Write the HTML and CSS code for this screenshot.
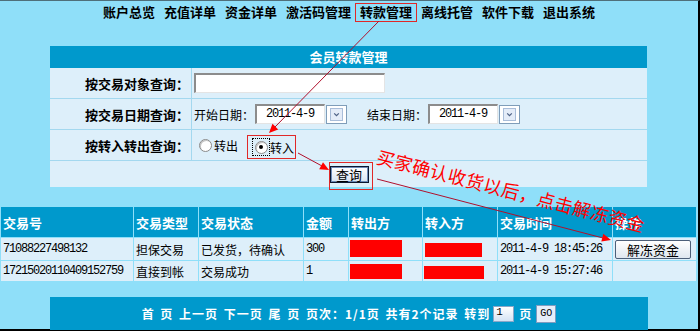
FILE: index.html
```html
<!DOCTYPE html>
<html lang="zh-CN">
<head>
<meta charset="utf-8">
<title>会员转款管理</title>
<link rel="stylesheet" href="styles.css">
</head>
<body>
<div class="frame">
  <nav class="nav">
    <span class="nav-item">账户总览</span>
    <span class="nav-item">充值详单</span>
    <span class="nav-item">资金详单</span>
    <span class="nav-item">激活码管理</span>
    <span class="nav-item nav-active">转款管理</span>
    <span class="nav-item">离线托管</span>
    <span class="nav-item">软件下载</span>
    <span class="nav-item">退出系统</span>
  </nav>

  <section class="panel">
    <div class="panel-title">会员转款管理</div>
    <div class="form-row">
      <div class="form-label">按交易对象查询：</div>
      <div class="form-field"><span class="field field-wide"></span></div>
    </div>
    <div class="form-row">
      <div class="form-label">按交易日期查询：</div>
      <div class="form-field">
        <span class="caption">开始日期：</span>
        <span class="field field-date">2011-4-9</span>
        <span class="picker"><svg width="21" height="19" viewBox="0 0 21 19"><rect x="0.5" y="0.5" width="20" height="18" fill="#fff" stroke="#7f9db9"/><rect x="4.5" y="3.5" width="12" height="12" fill="#e4ecf8" stroke="#a9bdd9"/><path d="M8.2 8.3l2.3 2.4 2.3-2.4" fill="none" stroke="#4d6185" stroke-width="1.2"/></svg></span>
        <span class="caption caption-end">结束日期：</span>
        <span class="field field-date">2011-4-9</span>
        <span class="picker"><svg width="21" height="19" viewBox="0 0 21 19"><rect x="0.5" y="0.5" width="20" height="18" fill="#fff" stroke="#7f9db9"/><rect x="4.5" y="3.5" width="12" height="12" fill="#e4ecf8" stroke="#a9bdd9"/><path d="M8.2 8.3l2.3 2.4 2.3-2.4" fill="none" stroke="#4d6185" stroke-width="1.2"/></svg></span>
      </div>
    </div>
    <div class="form-row">
      <div class="form-label">按转入转出查询：</div>
      <div class="form-field">
        <span class="radio"></span><span class="radio-text">转出</span>
        <span class="radio-mark">
          <span class="focus-ring"><span class="radio radio-on"></span></span><span class="radio-text">转入</span>
        </span>
      </div>
    </div>
    <div class="form-row form-submit">
      <span class="submit-mark"><span class="btn btn-query">查询</span></span>
    </div>
  </section>

  <table class="grid">
    <colgroup>
      <col class="c-no"><col class="c-type"><col class="c-state"><col class="c-amt"><col class="c-out"><col class="c-in"><col class="c-time"><col class="c-op">
    </colgroup>
    <thead>
      <tr><th>交易号</th><th>交易类型</th><th>交易状态</th><th>金额</th><th>转出方</th><th>转入方</th><th>交易时间</th><th>操作</th></tr>
    </thead>
    <tbody>
      <tr class="row-first">
        <td class="num">71088227498132</td>
        <td>担保交易</td>
        <td>已发货，待确认</td>
        <td class="num">300</td>
        <td class="masked"><span class="mask mask-a"></span></td>
        <td class="masked"><span class="mask mask-b"></span></td>
        <td class="num">2011-4-9 18:45:26</td>
        <td class="op"><span class="btn btn-thaw">解冻资金</span></td>
      </tr>
      <tr class="row-second">
        <td class="num">17215020110409152759</td>
        <td>直接到帐</td>
        <td>交易成功</td>
        <td class="num">1</td>
        <td class="masked"><span class="mask mask-c"></span></td>
        <td class="masked"><span class="mask mask-d"></span></td>
        <td class="num">2011-4-9 15:27:46</td>
        <td class="op"></td>
      </tr>
    </tbody>
  </table>

  <div class="pager">
    <span class="pager-text">首 页 上一页 下一页 尾 页 页次：1/1页 共有2个记录 转到</span>
    <span class="page-input">1</span>
    <span class="pager-text pager-unit">页</span>
    <span class="btn-go">GO</span>
  </div>

  <svg class="arrows" width="700" height="331" viewBox="0 0 700 331">
    <g stroke="#b0102c" stroke-width="1" fill="none">
      <line x1="379" y1="21" x2="274" y2="128"/>
      <line x1="298" y1="153" x2="322" y2="166"/>
      <line x1="377" y1="179" x2="603" y2="238"/>
    </g>
    <g fill="#ff0000">
      <polygon points="269,133 278.2,129.4 272.5,123.8"/>
      <polygon points="329,170 319.2,169.2 323,162.2"/>
      <polygon points="611,240 601.3,241.6 603.3,233.8"/>
    </g>
  </svg>
  <div class="note">买家确认收货以后，点击解冻资金</div>
</div>
</body>
</html>
```

FILE: styles.css
```css
* {
  box-sizing: border-box;
  margin: 0;
  padding: 0;
}

html, body {
  width: 700px;
  height: 331px;
  overflow: hidden;
}

body {
  background: #8fdff9;
  font-family: "Noto Sans CJK SC", "Liberation Sans", sans-serif;
  font-size: 12px;
  color: #000;
}

.frame {
  position: relative;
  width: 700px;
  height: 331px;
  border-top: 1px solid #4f6f7a;
  border-right: 2px solid #000;
  border-bottom: 2px solid #000;
}

/* top navigation */
.nav {
  display: flex;
  justify-content: center;
  gap: 9px;
  height: 21px;
  padding-top: 2px;
  font-size: 13px;
  font-weight: bold;
  line-height: 18px;
}

.nav-item {
  position: relative;
  white-space: nowrap;
}

.nav-active::after {
  content: "";
  position: absolute;
  left: -5px;
  right: -5px;
  top: 0;
  bottom: 0;
  border: 1px solid #e02828;
}

/* search panel */
.panel {
  width: 597px;
  margin: 24px 0 0 50px;
  background: #ddeffa;
}

.panel-title {
  height: 22px;
  line-height: 22px;
  background: #0099cc;
  color: #fff;
  font-size: 13px;
  font-weight: bold;
  text-align: center;
}

.form-row {
  display: grid;
  grid-template-columns: 142px 1fr;
  height: 31px;
  border-bottom: 1px solid #a3d8ef;
}

.form-label {
  display: flex;
  align-items: center;
  justify-content: flex-end;
  padding-right: 2px;
  border-right: 1px solid #a3d8ef;
  font-size: 13px;
  font-weight: bold;
  white-space: nowrap;
}

.form-field {
  display: flex;
  align-items: center;
  padding-left: 2px;
  white-space: nowrap;
}

.field {
  display: block;
  height: 20px;
  background: #fff;
  border-style: solid;
  border-width: 2px 1px 1px 2px;
  border-color: #8c8c8c #e4e4e4 #e4e4e4 #8c8c8c;
}

.field-wide {
  width: 191px;
}

.field-date {
  width: 70px;
  margin-left: 1px;
  padding-left: 9px;
  font-family: "Liberation Mono", monospace;
  font-size: 12px;
  letter-spacing: -1.2px;
  line-height: 16px;
}

.caption {
  font-size: 12px;
}

.caption-end {
  margin-left: 20px;
}

.picker {
  display: block;
  height: 19px;
  margin-left: 1px;
}

.picker svg {
  display: block;
}

.radio {
  display: block;
  width: 13px;
  height: 13px;
  margin-left: 5px;
  border-radius: 50%;
  border: 1px solid #8a8a8a;
  background: #fff;
  box-shadow: inset 1px 1px 0 #c4c4c4;
  position: relative;
}

.radio-on::after {
  content: "";
  position: absolute;
  left: 3.5px;
  top: 3.5px;
  width: 4px;
  height: 4px;
  border-radius: 50%;
  background: #000;
}

.radio-text {
  margin-left: 2px;
  font-size: 12px;
}

.radio-mark {
  display: flex;
  align-items: center;
  height: 24px;
  margin: 4px 0 0 9px;
  padding: 0 1px 0 4px;
  border: 1px solid #e02828;
}

.focus-ring {
  display: flex;
  align-items: center;
  justify-content: center;
  width: 18px;
  height: 18px;
  border: 1px dotted #000;
}

.focus-ring .radio {
  margin-left: 0;
}

.focus-ring + .radio-text {
  margin-left: 0;
}

.form-submit {
  display: flex;
  justify-content: center;
  align-items: center;
  height: 26px;
  border-bottom: 0;
}

.submit-mark {
  position: relative;
  display: block;
  margin-left: 1px;
}

.submit-mark::after {
  content: "";
  position: absolute;
  left: -1px;
  top: -4px;
  right: -4px;
  bottom: -7px;
  border: 1px solid #e02828;
}

.btn {
  display: flex;
  align-items: center;
  justify-content: center;
  white-space: nowrap;
}

.btn-query {
  width: 39px;
  height: 17px;
  font-size: 13px;
  border: 1px solid #0b1630;
  box-shadow: inset 0 0 0 1px #6d8bb8;
  background: linear-gradient(#ffffff, #d9e3f2);
}

/* data grid */
.grid {
  margin-top: 19px;
  width: 697px;
  table-layout: fixed;
  border-collapse: separate;
  border-spacing: 1px;
}

.c-no { width: 132px; }
.c-type { width: 64px; }
.c-state { width: 104px; }
.c-amt { width: 44px; }
.c-out { width: 73px; }
.c-in { width: 74px; }
.c-time { width: 114px; }
.c-op { width: 83px; }

.grid th {
  height: 30px;
  padding-left: 2px;
  background: #0099cc;
  color: #fff;
  font-size: 13px;
  font-weight: bold;
  text-align: left;
  white-space: nowrap;
}

.grid td {
  padding-left: 2px;
  background: #ddeffa;
  font-size: 12px;
  white-space: nowrap;
  overflow: hidden;
}

.row-first td {
  height: 22px;
}

.row-second td {
  height: 20px;
}

.grid td.num {
  font-family: "Liberation Mono", monospace;
  font-size: 12px;
  letter-spacing: -1.2px;
}

.grid td.masked {
  padding: 0 0 1px 1px;
  vertical-align: bottom;
}

.mask {
  display: block;
  background: #ff0000;
}

.mask-a { width: 52px; height: 17px; margin-bottom: 2px; }
.mask-b { width: 57px; height: 14px; margin-bottom: 2px; margin-left: 1px; }
.mask-c { width: 52px; height: 15px; margin-bottom: 1px; }
.mask-d { width: 60px; height: 13px; margin-bottom: 1px; }

.grid td.op {
  padding-left: 2px;
}

.btn-thaw {
  width: 76px;
  height: 19px;
  font-size: 13px;
  border: 1px solid #4d5f79;
  border-radius: 2px;
  background: linear-gradient(#ffffff, #dfe6ef);
}

/* pager */
.pager {
  display: flex;
  justify-content: center;
  align-items: center;
  width: 598px;
  height: 33px;
  margin: 15px 0 0 50px;
  background: #0099cc;
  color: #fff;
  font-size: 12px;
  font-weight: bold;
}

.pager-text {
  white-space: pre;
  letter-spacing: 1px;
  word-spacing: 2px;
}

.pager-unit {
  margin-left: 5px;
}

.page-input {
  display: block;
  width: 21px;
  height: 16px;
  margin-left: 3px;
  padding-left: 2px;
  border: 1px solid #8aa7c8;
  background: linear-gradient(#ffffff, #d5e3f4);
  color: #000;
  font-family: "Liberation Mono", monospace;
  font-size: 11px;
  font-weight: normal;
  line-height: 11px;
}

.btn-go {
  display: flex;
  align-items: center;
  justify-content: center;
  width: 20px;
  height: 18px;
  margin-left: 4px;
  border: 1px solid #7f9cc0;
  background: #e6eef9;
  color: #000;
  font-family: "Liberation Mono", monospace;
  font-size: 10px;
  font-weight: normal;
}

/* annotations drawn over the screenshot */
.arrows {
  position: absolute;
  left: 0;
  top: -1px;
  pointer-events: none;
}

.note {
  position: absolute;
  left: 373px;
  top: 178px;
  width: 276px;
  height: 22px;
  line-height: 22px;
  color: #ff0000;
  font-size: 18px;
  letter-spacing: 0.4px;
  white-space: nowrap;
  transform: rotate(14.5deg);
  transform-origin: 50% 50%;
}
```
